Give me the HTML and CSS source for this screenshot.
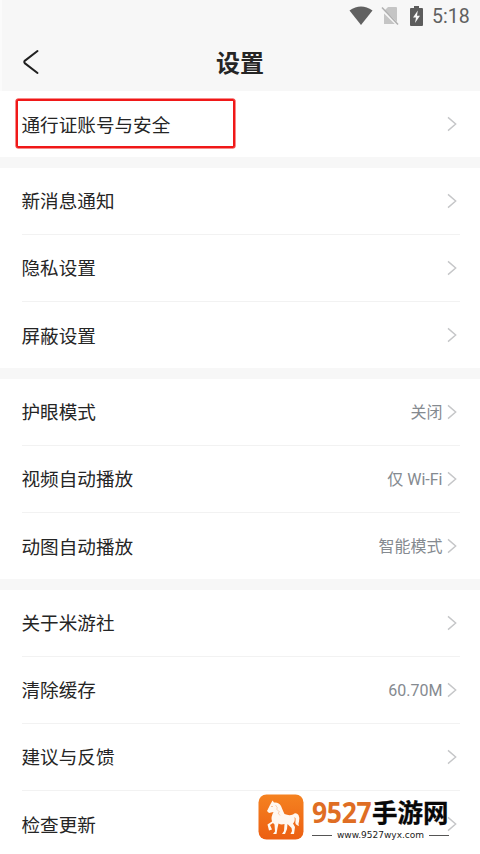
FILE: index.html
```html
<!DOCTYPE html>
<html lang="zh-CN">
<head>
<meta charset="utf-8">
<title>设置</title>
<link rel="stylesheet" href="styles.css">
</head>
<body>
<svg class="defs" width="0" height="0"><symbol id="chevron" viewBox="0 0 10 16"><path d="M1 1.4 8.7 8 1 14.6" fill="none" stroke="#c5c6c8" stroke-width="1.4"/></symbol></svg>
<div class="screen">
  <header class="top">
    <div class="status">
      <svg class="wifi" width="24" height="20" viewBox="0 0 24 20"><path d="M.5 4.5Q12-3.5 23.500 4.500L12 19z" fill="#616161"/></svg>
      <svg class="sim" width="18" height="20" viewBox="0 0 18 20"><path d="M7 1h8q1 0 1 1v16H3V5z" fill="#c5c5c5"/><path d="M0 2.500 17 19" stroke="#f7f7f7" stroke-width="3"/><path d="M1 1.500 17 18.500" stroke="#b0b0b0" stroke-width="1.500"/></svg>
      <svg class="battery" width="13" height="20" viewBox="0 0 13 20"><path d="M4 0h5v2h3q1 0 1 1v16q0 1-1 1H1q-1 0-1-1V3q0-1 1-1h3z" fill="#5c5c5c"/><path d="M7.800 4.500 3 11.500h3L5 17l5-7.200H7z" fill="#f7f7f7"/></svg>
      <span class="time">5:18</span>
    </div>
    <div class="nav">
      <svg class="back" width="18" height="26" viewBox="0 0 18 26"><path d="M15.500 2 3 11.600Q1.500 13 3 14.400L15.500 24" fill="none" stroke="#202020" stroke-width="2" stroke-linecap="round" stroke-linejoin="round"/></svg>
      <h1>设置</h1>
    </div>
  </header>
  <main>
    <section class="group">
      <div class="row"><span class="label">通行证账号与安全</span><svg class="arrow"><use href="#chevron"/></svg><div class="highlight"></div></div>
    </section>
    <section class="group">
      <div class="row"><span class="label">新消息通知</span><svg class="arrow"><use href="#chevron"/></svg></div>
      <div class="row"><span class="label">隐私设置</span><svg class="arrow"><use href="#chevron"/></svg></div>
      <div class="row"><span class="label">屏蔽设置</span><svg class="arrow"><use href="#chevron"/></svg></div>
    </section>
    <section class="group">
      <div class="row"><span class="label">护眼模式</span><span class="value">关闭</span><svg class="arrow"><use href="#chevron"/></svg></div>
      <div class="row"><span class="label">视频自动播放</span><span class="value">仅 Wi-Fi</span><svg class="arrow"><use href="#chevron"/></svg></div>
      <div class="row"><span class="label">动图自动播放</span><span class="value">智能模式</span><svg class="arrow"><use href="#chevron"/></svg></div>
    </section>
    <section class="group">
      <div class="row"><span class="label">关于米游社</span><svg class="arrow"><use href="#chevron"/></svg></div>
      <div class="row"><span class="label">清除缓存</span><span class="value">60.70M</span><svg class="arrow"><use href="#chevron"/></svg></div>
      <div class="row"><span class="label">建议与反馈</span><svg class="arrow"><use href="#chevron"/></svg></div>
      <div class="row"><span class="label">检查更新</span><svg class="arrow"><use href="#chevron"/></svg></div>
    </section>
  </main>
  <div class="brand">
    <svg width="46" height="46" viewBox="0 0 46 46">
      <defs><linearGradient id="orange" x1="0" y1="0" x2="0" y2="1"><stop offset="0" stop-color="#f58220"/><stop offset="1" stop-color="#ec5f12"/></linearGradient></defs>
      <rect x=".5" y=".5" width="45" height="45" rx="8" fill="url(#orange)"/>
      <path d="M14.500 6.500 16 8.500Q21 8 23 12 25 17 26.500 20Q31 22 35 20.500 38 18 40.500 21 42 24 41 27.500 40 30 41 32 36.500 31 37.500 26.500 38 23.500 36.500 23 37.500 27 35 29.500L37 33 36 40H32.500L34 37 33.500 34 29.500 30 29 35 27 40H24L26 37 26.500 30Q23 31 20.500 29.500L19.500 34 18.500 40H15L17 37.500 16.500 30.500 15 29 12 31 14 35.500 11 36.500 9.500 30.500 14 27.500Q12.500 23 15.500 18L11 19 9 17 12 11z" fill="#fff8f0"/>
      <path d="M17.500 11 19.500 14 18.500 15 21.500 18 20 19 22 21.500" fill="none" stroke="#f5b78b" stroke-width=".6"/><circle cx="14" cy="12.500" r=".5" fill="#ec6a1a"/>
    </svg>
    <div class="brand-text">
      <div class="brand-name"><span class="digits">9527</span><span class="cn">手游网</span></div>
      <div class="brand-url"><i></i><span>www.9527wyx.com</span><i></i></div>
    </div>
  </div>
</div>
</body>
</html>
```
FILE: styles.css
```css
* { box-sizing: border-box; }
body { margin: 0; background: #fff; font-family: Roboto, "Noto Sans CJK SC", sans-serif; color: #252525; }
.defs { position: absolute; }
.screen { position: relative; width: 480px; height: 854px; overflow: hidden; background: #fff; }
.top { height: 91px; background: #f7f7f7; border-left: 2px solid #fbfbfb; }
.status { height: 32px; display: flex; align-items: center; justify-content: flex-end; padding-right: 11px; }
.wifi { margin-right: 8px; }
.sim { margin-right: 11px; }
.battery { margin-right: 9px; }
.time { font-size: 19.500px; line-height: 32px; color: #606060; width: 37px; white-space: nowrap; padding-top: 2px; }
.nav { height: 59px; display: grid; grid-template-columns: 70px 1fr 72px; align-items: center; }
.back { margin-left: 20px; }
h1 { margin: 0; font-size: 24px; line-height: 36px; font-weight: 700; text-align: center; padding-top: 5px; }
.group { border-bottom: 11px solid #f7f7f7; }
.row { position: relative; height: 67px; margin: 0 20.500px 0 21.500px; display: flex; align-items: center; border-bottom: 1px solid #f2f2f2; }
.row:last-child { height: 66px; border-bottom-color: transparent; }
.label { flex: 1; font-size: 18.600px; line-height: 28px; padding-top: 2px; }
.row:last-child .label { padding-top: 4px; }
.value { font-size: 16px; line-height: 24px; color: #858a90; margin-right: 4px; padding-top: 2px; }
.arrow { width: 10px; height: 16px; margin-right: 3px; }
.highlight { position: absolute; left: -5.500px; top: 8px; width: 219px; height: 49px; border: 2px solid #f01818; border-radius: 2px; box-shadow: 0 0 0 .5px #f01818; }
.brand { position: absolute; left: 258px; top: 794px; display: flex; gap: 8px; }
.brand-text { width: 137px; height: 48px; }
.brand-name { display: flex; align-items: center; height: 36px; font-weight: 700; white-space: nowrap; }
.digits { width: 60px; font: 700 26.500px/30px "Noto Sans", sans-serif; letter-spacing: -.3px; color: #df6e24; transform: scaleY(1.1); }
.cn { font-size: 25.500px; line-height: 30px; color: #080808; font-weight: 700; margin-top: 1px; -webkit-text-stroke: .3px #080808; }
.brand-url { display: flex; align-items: center; justify-content: space-between; height: 10px; color: #222; font: 9px/10px "DejaVu Sans", sans-serif; }
.brand-url i { width: 20px; height: 1px; background: #555; }
```
